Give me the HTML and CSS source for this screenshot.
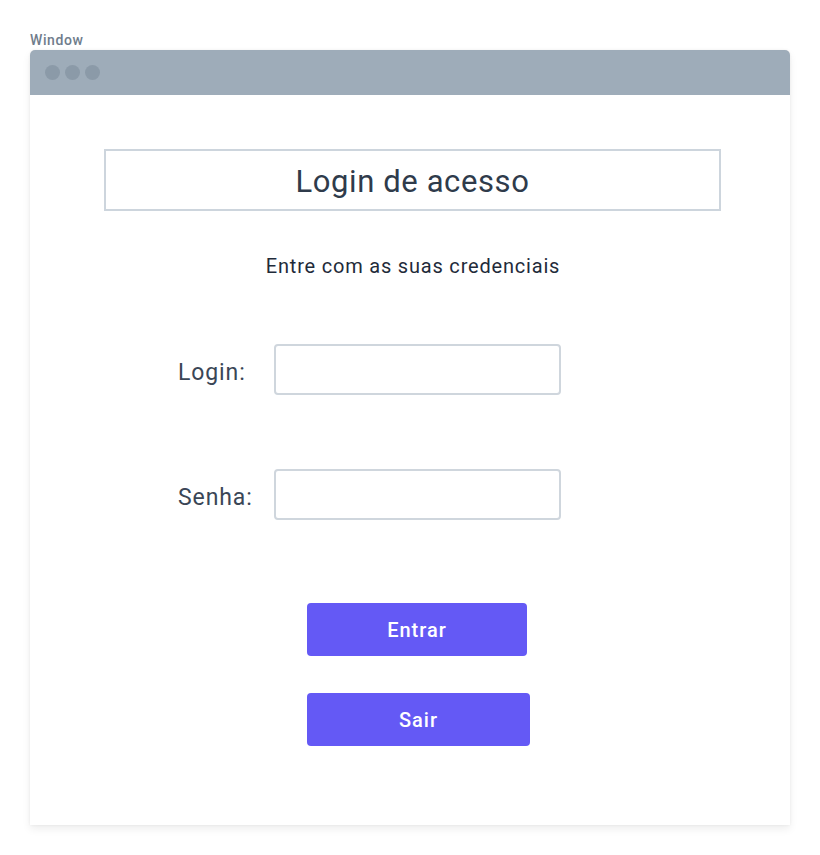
FILE: index.html
```html
<!DOCTYPE html>
<html lang="pt">
<head>
<meta charset="utf-8">
<title>Login de acesso</title>
<link rel="stylesheet" href="styles.css">
</head>
<body>
<div class="page">
  <div class="win-label">Window</div>
  <div class="window">
    <div class="titlebar">
      <span class="dot"></span><span class="dot"></span><span class="dot"></span>
    </div>
    <div class="content">
      <div class="title-box">Login de acesso</div>
      <p class="subtitle">Entre com as suas credenciais</p>
      <div class="field field-login">
        <label class="label">Login:</label>
        <div class="input"></div>
      </div>
      <div class="field field-senha">
        <label class="label">Senha:</label>
        <div class="input"></div>
      </div>
      <div class="btn btn-entrar">Entrar</div>
      <div class="btn btn-sair">Sair</div>
    </div>
  </div>
</div>
</body>
</html>
```
FILE: styles.css
```css
* { box-sizing: border-box; }
html, body { margin: 0; padding: 0; background: #ffffff; }
body { font-family: Roboto, "Noto Sans", sans-serif; color: #2f3b4b; }
.page { padding: 31px 30px 30px 30px; width: 820px; }
.win-label { font-size: 14px; font-weight: 500; color: #6f7d8c; line-height: 19px; height: 19px; letter-spacing: 0.6px; }
.window { width: 760px; background: #fff; box-shadow: 0 4px 8px rgba(0,0,0,0.07), 0 0 3px rgba(0,0,0,0.06); border-radius: 5px 5px 0 0; }
.titlebar { height: 45px; background: #9eacb9; border-radius: 5px 5px 0 0; display: flex; align-items: center; gap: 5px; padding-left: 15px; }
.dot { width: 15px; height: 15px; border-radius: 50%; background: #8b9aa8; }
.content { height: 730px; padding-top: 54px; }
.title-box { margin-left: 74px; width: 617px; height: 62px; border: 2px solid #cdd5dd; display: flex; align-items: center; justify-content: center; font-size: 31px; color: #2f3b4b; padding-top: 2px; letter-spacing: 0.6px; }
.subtitle { margin: 0; margin-top: 43px; text-align: center; font-size: 20px; line-height: 24px; color: #1f2b3a; padding-left: 6px; letter-spacing: 0.8px; }
.field { display: flex; align-items: center; margin-left: 148px; }
.field-login { margin-top: 66px; }
.field-senha { margin-top: 74px; }
.label { font-size: 23px; color: #3a4656; width: 96px; letter-spacing: 0.9px; padding-top: 6px; }
.input { width: 287px; height: 51px; border: 2px solid #cfd6dd; border-radius: 4px; }
.btn { margin-left: 277px; height: 53px; border-radius: 4px; background: #6459f5; color: #fff; font-size: 20px; font-weight: 500; display: flex; align-items: center; justify-content: center; letter-spacing: 1px; }
.btn-entrar { width: 220px; margin-top: 83px; }
.btn-sair { width: 223px; margin-top: 37px; }
```
